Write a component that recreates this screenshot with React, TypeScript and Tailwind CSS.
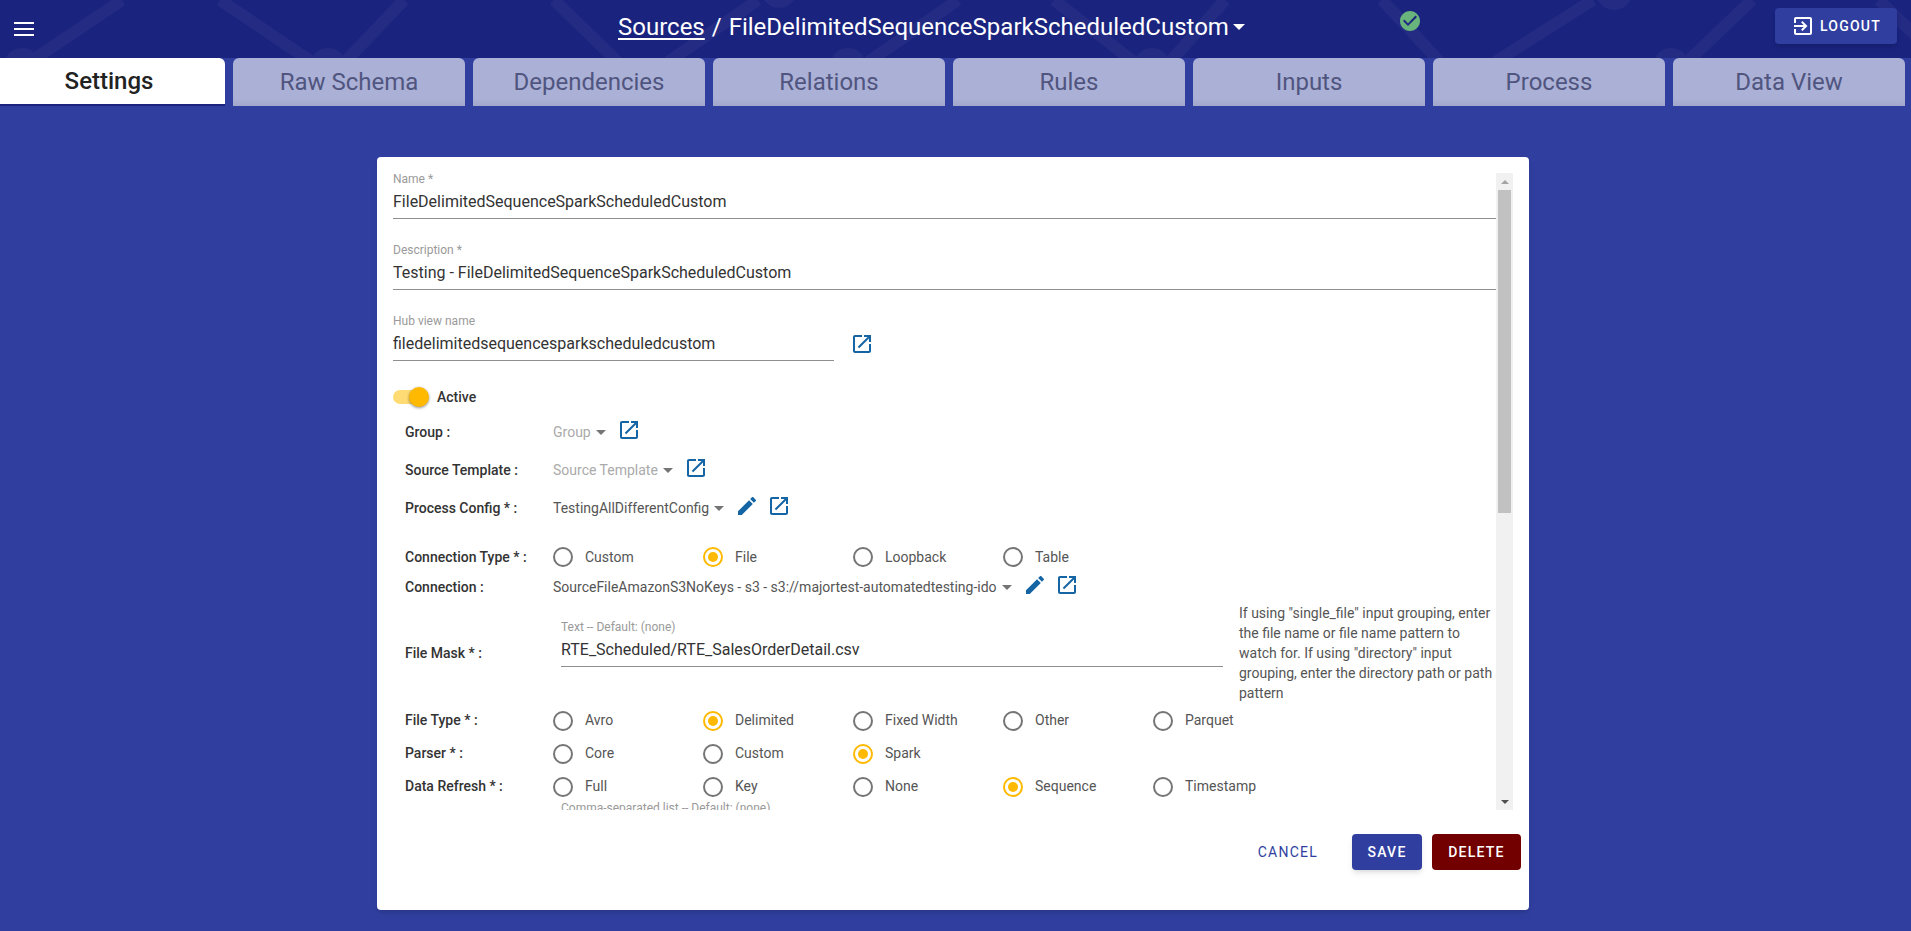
import React from 'react';

const TABS = ['Settings', 'Raw Schema', 'Dependencies', 'Relations', 'Rules', 'Inputs', 'Process', 'Data View'];

const OPEN_PATH = 'M19 19H5V5h7V3H5c-1.11 0-2 .9-2 2v14c0 1.1.89 2 2 2h14c1.1 0 2-.9 2-2v-7h-2v7zM14 3v2h3.59l-9.83 9.83 1.41 1.41L19 6.41V10h2V3h-7z';
const EDIT_PATH = 'M3 17.25V21h3.75L17.81 9.94l-3.75-3.75L3 17.25zM20.71 7.04c.39-.39.39-1.02 0-1.41l-2.34-2.34c-.39-.39-1.02-.39-1.41 0l-1.83 1.83 3.75 3.75 1.83-1.83z';

function Icon({ d, className }: { d: string; className?: string }) {
  return (
    <svg viewBox="0 0 24 24" className={className} fill="currentColor">
      <path d={d} />
    </svg>
  );
}

function OpenIcon({ className = '' }: { className?: string }) {
  return <Icon d={OPEN_PATH} className={`w-6 h-6 shrink-0 text-[#1565a5] ${className}`} />;
}

function EditIcon({ className = '' }: { className?: string }) {
  return <Icon d={EDIT_PATH} className={`w-6 h-6 shrink-0 text-[#1565a5] ${className}`} />;
}

function Caret({ className = '' }: { className?: string }) {
  return (
    <svg viewBox="0 0 10 5" className={`shrink-0 ${className}`} fill="currentColor">
      <path d="M0 0l5 5 5-5z" />
    </svg>
  );
}

function Field({ label, value, className = '' }: { label: string; value: string; className?: string }) {
  return (
    <div className={className}>
      <div className="text-[12px] leading-[12px] text-[#9a9a9a] mb-[5px]">{label}</div>
      <div className="text-[16px] leading-[24px] text-[#333] pb-[4px] border-b border-[#8f8f8f]">{value}</div>
    </div>
  );
}

function Row({ label, height, children }: { label: string; height: string; children?: React.ReactNode }) {
  return (
    <div className={`flex items-center pl-[12px] ${height}`}>
      <div className="w-[148px] shrink-0 text-[14px] font-medium text-[#333]">{label}</div>
      {children}
    </div>
  );
}

function Radio({ label, checked }: { label: string; checked?: boolean }) {
  return (
    <div className="w-[150px] flex items-center shrink-0">
      <span className={`w-[20px] h-[20px] rounded-full border-2 flex items-center justify-center ${checked ? 'border-[#ffb900]' : 'border-[#757575]'}`}>
        {checked && <span className="w-[10px] h-[10px] rounded-full bg-[#ffb900]" />}
      </span>
      <span className="ml-[12px] text-[14px] text-[#555]">{label}</span>
    </div>
  );
}

function Radios({ options, selected }: { options: string[]; selected: string }) {
  return (
    <div className="flex">
      {options.map((o) => (
        <Radio key={o} label={o} checked={o === selected} />
      ))}
    </div>
  );
}

function Select({ value, placeholder }: { value: string; placeholder?: boolean }) {
  return (
    <div className="flex items-center">
      <span className={`text-[14px] ${placeholder ? 'text-[#aaa]' : 'text-[#555]'}`}>{value}</span>
      <Caret className="w-[10px] h-[5px] ml-[5px] text-[#757575]" />
    </div>
  );
}

function HeaderPattern() {
  const lines = [
    [122, 0, 30, 62], [220, 0, 312, 62], [404, 0, 345, 62], [554, 0, 618, 62],
    [758, 0, 668, 62], [1054, 0, 1134, 62], [1225, 0, 1170, 62], [1382, 0, 1440, 62],
    [1593, 0, 1495, 62], [1752, 0, 1687, 62], [1879, 0, 1925, 45], [958, 0, 868, 62],
  ];
  const dots = [
    [22, 66], [328, 66], [848, 66], [1152, 66], [1671, 66], [779, -10], [1614, -8],
  ];
  return (
    <svg className="absolute inset-0 w-full h-full" viewBox="0 0 1911 58" preserveAspectRatio="none">
      <g fill="#232b83" stroke="#232b83">
        {lines.map(([x1, y1, x2, y2], i) => (
          <line key={i} x1={x1} y1={y1} x2={x2} y2={y2} strokeWidth="12" />
        ))}
        {dots.map(([cx, cy], i) => (
          <circle key={i} cx={cx} cy={cy} r="18" stroke="none" />
        ))}
      </g>
    </svg>
  );
}

export default function App() {
  return (
    <div className="h-[931px] overflow-hidden bg-[#303f9f] font-[Roboto,sans-serif]">
      <header className="relative h-[58px] bg-[#1a237e] text-white">
        <HeaderPattern />
        <div className="relative flex items-center h-full">
          <div className="w-[14px]" />
          <svg viewBox="0 0 20 14" className="w-[20px] h-[14px]" fill="currentColor">
            <path d="M0 0h20v2H0zM0 6h20v2H0zM0 12h20v2H0z" />
          </svg>
          <div className="flex items-center ml-[584px] text-[24px] leading-[30px] -mt-[5px]">
            <span className="underline decoration-2 underline-offset-[3px]">Sources</span>
            <span className="mx-[7px]">/</span>
            <span>FileDelimitedSequenceSparkScheduledCustom</span>
            <Caret className="w-[12px] h-[6px] ml-[4px] text-white" />
          </div>
          <Icon
            d="M12 2C6.48 2 2 6.48 2 12s4.48 10 10 10 10-4.48 10-10S17.52 2 12 2zm-2 15l-5-5 1.41-1.41L10 14.17l7.59-7.59L19 8l-9 9z"
            className="absolute left-[1398px] top-[9px] w-6 h-6 text-[#69b37c]"
          />
          <button className="absolute left-[1775px] top-[8px] w-[122px] h-[36px] rounded bg-[#303f9f] flex items-center justify-center shadow-md">
            <Icon
              d="M10.09 15.59L11.5 17l5-5-5-5-1.41 1.41L12.67 11H3v2h9.67l-2.58 2.59zM19 3H5c-1.11 0-2 .9-2 2v4h2V5h14v14H5v-4H3v4c0 1.1.89 2 2 2h14c1.1 0 2-.9 2-2V5c0-1.1-.9-2-2-2z"
              className="w-6 h-6 mr-[5px]"
            />
            <span className="text-[14px] font-medium tracking-[1.25px]">LOGOUT</span>
          </button>
        </div>
      </header>

      <nav className="flex gap-[8px] -ml-[7px] h-[48px]">
        {TABS.map((t, i) => (
          <div
            key={t}
            className={`w-[232px] shrink-0 rounded-t-[6px] flex items-center justify-center text-[24px] ${
              i === 0
                ? 'bg-white text-[#222] font-medium border-b-2 border-[#1a237e]'
                : 'bg-[#abb0d6] text-[#50557f] shadow-[inset_0_-6px_6px_-4px_rgba(0,0,0,0.08)]'
            }`}
          >
            {t}
          </div>
        ))}
      </nav>

      <main className="w-[1152px] h-[753px] mt-[51px] ml-[377px] bg-white rounded-[4px] shadow-md">
        <div className="flex h-[653px] pt-[16px] pl-[16px] pr-[16px]">
          <div className="flex-1 h-[637px] overflow-hidden">
            <Field label="Name *" value="FileDelimitedSequenceSparkScheduledCustom" />
            <Field label="Description *" value="Testing - FileDelimitedSequenceSparkScheduledCustom" className="mt-[25px]" />
            <div className="flex mt-[25px]">
              <Field label="Hub view name" value="filedelimitedsequencesparkscheduledcustom" className="w-[441px]" />
              <OpenIcon className="ml-[16px] mt-[17px]" />
            </div>

            <div className="flex items-center h-[30px] mt-[21px]">
              <span className="relative w-[36px] h-[20px] flex items-center">
                <span className="w-[34px] h-[14px] rounded-full bg-[#ffdc73]" />
                <span className="absolute right-0 top-0 w-[20px] h-[20px] rounded-full bg-[#ffb900] shadow-[0_1px_3px_rgba(0,0,0,0.45)]" />
              </span>
              <span className="ml-[8px] text-[14px] font-medium text-[#333]">Active</span>
            </div>

            <Row label="Group :" height="h-[38px] mt-[1px]">
              <Select value="Group" placeholder />
              <OpenIcon className="ml-[11px] -mt-[4px]" />
            </Row>
            <Row label="Source Template :" height="h-[38px]">
              <Select value="Source Template" placeholder />
              <OpenIcon className="ml-[11px] -mt-[4px]" />
            </Row>
            <Row label="Process Config * :" height="h-[38px]">
              <Select value="TestingAllDifferentConfig" />
              <EditIcon className="ml-[11px] -mt-[4px]" />
              <OpenIcon className="ml-[8px] -mt-[4px]" />
            </Row>

            <Row label="Connection Type * :" height="h-[30px] mt-[15px]">
              <Radios options={['Custom', 'File', 'Loopback', 'Table']} selected="File" />
            </Row>
            <Row label="Connection :" height="h-[30px]">
              <Select value="SourceFileAmazonS3NoKeys - s3 - s3://majortest-automatedtesting-ido" />
              <EditIcon className="ml-[11px] -mt-[4px]" />
              <OpenIcon className="ml-[8px] -mt-[4px]" />
            </Row>
            <Row label="File Mask * :" height="h-[102px]">
              <Field label="Text -- Default: (none)" value="RTE_Scheduled/RTE_SalesOrderDetail.csv" className="w-[662px] ml-[8px] -mt-[18px]" />
              <p className="w-[256px] ml-[16px] text-[14px] leading-[20px] text-[#555] shrink-0">
                If using "single_file" input grouping, enter the file name or file name pattern to watch for. If using "directory" input grouping, enter the directory path or path pattern
              </p>
            </Row>
            <Row label="File Type * :" height="h-[33px]">
              <Radios options={['Avro', 'Delimited', 'Fixed Width', 'Other', 'Parquet']} selected="Delimited" />
            </Row>
            <Row label="Parser * :" height="h-[33px]">
              <Radios options={['Core', 'Custom', 'Spark']} selected="Spark" />
            </Row>
            <Row label="Data Refresh * :" height="h-[33px]">
              <Radios options={['Full', 'Key', 'None', 'Sequence', 'Timestamp']} selected="Sequence" />
            </Row>
            <div className="ml-[168px] -mt-[1px] text-[12px] leading-[12px] text-[#9a9a9a]">Comma-separated list -- Default: (none)</div>
          </div>

          {/* scrollbar */}
          <div className="w-[17px] h-[637px] bg-[#f1f1f1] flex flex-col items-center shrink-0">
            <div className="h-[17px] flex items-center justify-center">
              <svg viewBox="0 0 8 4" className="w-[8px] h-[4px]" fill="#a3a3a3"><path d="M0 4l4-4 4 4z" /></svg>
            </div>
            <div className="w-[13px] h-[323px] bg-[#c1c1c1]" />
            <div className="flex-1" />
            <div className="h-[17px] flex items-center justify-center">
              <svg viewBox="0 0 8 4" className="w-[8px] h-[4px]" fill="#505050"><path d="M0 0l4 4 4-4z" /></svg>
            </div>
          </div>
        </div>

        <div className="flex items-center justify-end pt-[24px] pr-[8px]">
          <button className="h-[36px] text-[14px] tracking-[1.25px] text-[#303f9f] mr-[34px]">CANCEL</button>
          <button className="h-[36px] w-[70px] rounded bg-[#303f9f] text-white text-[14px] font-medium tracking-[1.25px] shadow-md">SAVE</button>
          <button className="h-[36px] w-[89px] ml-[10px] rounded bg-[#730000] text-white text-[14px] font-medium tracking-[1.25px]">DELETE</button>
        </div>
      </main>
    </div>
  );
}
